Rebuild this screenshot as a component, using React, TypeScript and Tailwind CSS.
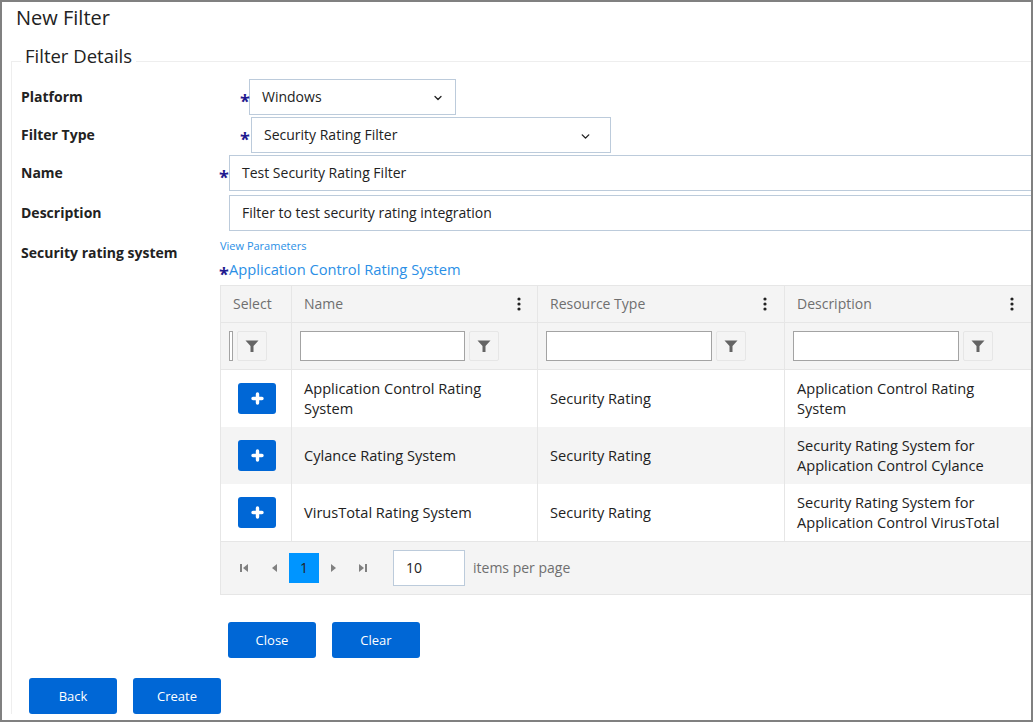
import { FiChevronDown } from "react-icons/fi";

const rows = [
  {
    name: "Application Control Rating System",
    type: "Security Rating",
    description: "Application Control Rating System",
  },
  {
    name: "Cylance Rating System",
    type: "Security Rating",
    description: "Security Rating System for Application Control Cylance",
  },
  {
    name: "VirusTotal Rating System",
    type: "Security Rating",
    description: "Security Rating System for Application Control VirusTotal",
  },
];

const Star = ({ className = "" }: { className?: string }) => (
  <span
    className={`w-[8px] shrink-0 flex justify-center text-[18px] font-bold leading-none text-[#1f1a8f] translate-y-[4px] ${className}`}
  >
    *
  </span>
);

const FilterButton = () => (
  <div className="w-[30px] h-[30px] shrink-0 flex justify-center items-center bg-[#f4f4f4] border border-[#e6e6e6] rounded-[2px]">
    <svg width="14" height="14" viewBox="0 0 14 14">
      <path d="M0.5 1.5h13L8.5 7v6l-3-0V7z" fill="#646464" />
    </svg>
  </div>
);

const Dots = () => (
  <svg width="4" height="14" viewBox="0 0 4 14">
    <circle cx="2" cy="2" r="1.6" fill="#222" />
    <circle cx="2" cy="7" r="1.6" fill="#222" />
    <circle cx="2" cy="12" r="1.6" fill="#222" />
  </svg>
);

const PlusIcon = () => (
  <svg width="13" height="13" viewBox="0 0 13 13">
    <path d="M6.5 2v9M2 6.5h9" stroke="#fff" strokeWidth="3.4" strokeLinecap="round" />
  </svg>
);

const HeaderCell = ({ title }: { title: string }) => (
  <th className="border-r border-b border-[#e6e6e6] pl-[12px] font-normal text-left">
    <div className="w-[217px] flex items-center justify-between text-[#6f6f6f]">
      <span className="pb-[2px]">{title}</span>
      <Dots />
    </div>
  </th>
);

const FilterCell = ({ inputClass }: { inputClass: string }) => (
  <td className="border-r border-b border-[#e6e6e6] pl-[8px]">
    <div className="flex items-center gap-[4px]">
      <input className={`${inputClass} h-[30px] bg-white border border-[#a3a3a3]`} />
      <FilterButton />
    </div>
  </td>
);

const Pager = ({ d }: { d: string }) => (
  <svg width="10" height="10" viewBox="0 0 10 10">
    <path d={d} fill="#808080" />
  </svg>
);

const Button = ({ label }: { label: string }) => (
  <button className="w-[88px] h-[36px] pt-[2px] bg-[#0067d6] text-white text-[13px] rounded-[3px]">
    {label}
  </button>
);

const Field = ({
  label,
  children,
  className = "",
}: {
  label: string;
  children: React.ReactNode;
  className?: string;
}) => (
  <div className={`flex items-center ${className}`}>
    <p className="w-[199px] shrink-0 pb-[2px] font-bold text-[14px] text-[#222]">{label}</p>
    {children}
  </div>
);

export default function App() {
  return (
    <div
      className="w-[1033px] h-[722px] border-2 border-[#808080] bg-white overflow-hidden text-[14px] text-[#222]"
      style={{ fontFamily: '"Open Sans", sans-serif' }}
    >
      <h1 className="h-[32px] pl-[14px] pt-[2px] text-[20px] leading-[28px] text-[#222]">
        New Filter
      </h1>
      <fieldset className="ml-[9px] mt-[10px] h-[670px] border-t border-l border-[#eeeeee] min-w-0">
        <legend className="ml-[9px] px-[4px] pb-[10px] text-[18.5px] leading-[24px]">
          Filter Details
        </legend>
        <div className="pl-[9px] mt-[1px]">
          <Field label="Platform" className="h-[36px]">
            <Star className="ml-[21px]" />
            <div className="w-[207px] h-[36px] border border-[#bccbdb] flex items-center justify-between pl-[12px] pr-[11px]">
              <span className="pb-[2px]">Windows</span>
              <FiChevronDown size={12} strokeWidth={2.6} className="mt-[2px]" />
            </div>
          </Field>
          <Field label="Filter Type" className="h-[36px] mt-[2px]">
            <Star className="ml-[21px] mr-[2px]" />
            <div className="w-[360px] h-[36px] border border-[#bccbdb] flex items-center justify-between pl-[12px] pr-[18px]">
              <span className="pb-[2px]">Security Rating Filter</span>
              <FiChevronDown size={13} strokeWidth={2.6} className="mt-[2px]" />
            </div>
          </Field>
          <Field label="Name" className="h-[36px] mt-[2px]">
            <Star className="mr-[1px]" />
            <div className="w-[830px] shrink-0 h-[36px] pb-[2px] border border-[#bccbdb] flex items-center pl-[12px]">
              Test Security Rating Filter
            </div>
          </Field>
          <Field label="Description" className="h-[36px] mt-[4px]">
            <div className="ml-[9px] w-[830px] shrink-0 h-[36px] pb-[2px] border border-[#bccbdb] flex items-center pl-[12px]">
              Filter to test security rating integration
            </div>
          </Field>
          <div className="flex mt-[7px]">
            <p className="w-[199px] shrink-0 font-bold text-[14px] pt-[4px]">
              Security rating system
            </p>
            <div className="w-[830px] shrink-0">
              <p className="text-[11px] leading-[16px] text-[#2b8fe6]">View Parameters</p>
              <div className="flex items-center h-[24px] mt-[4px] mb-[3px]">
                <Star className="mr-[1px]" />
                <span className="pb-[2px] text-[#2b8fe6] text-[14.7px] leading-[20px]">
                  Application Control Rating System
                </span>
              </div>
              <table className="w-[814px] table-fixed border-collapse border-t border-l border-[#e6e6e6]">
                <colgroup>
                  <col className="w-[71px]" />
                  <col className="w-[246px]" />
                  <col className="w-[247px]" />
                  <col className="w-[250px]" />
                </colgroup>
                <thead>
                  <tr className="h-[37px] bg-[#f4f4f4]">
                    <th className="border-r border-b border-[#e6e6e6] pb-[2px] font-normal text-left pl-[12px] text-[#6f6f6f]">
                      Select
                    </th>
                    <HeaderCell title="Name" />
                    <HeaderCell title="Resource Type" />
                    <HeaderCell title="Description" />
                  </tr>
                  <tr className="h-[47px] bg-[#f4f4f4]">
                    <td className="border-r border-b border-[#e6e6e6] pl-[8px]">
                      <div className="flex items-center gap-[4px]">
                        <input className="w-[4px] h-[30px] bg-white border border-[#a3a3a3]" />
                        <FilterButton />
                      </div>
                    </td>
                    <FilterCell inputClass="w-[165px]" />
                    <FilterCell inputClass="w-[166px]" />
                    <FilterCell inputClass="w-[166px]" />
                  </tr>
                </thead>
                <tbody className="text-[14.6px]">
                  {rows.map((row, i) => (
                    <tr
                      key={row.name}
                      className={`h-[57px] leading-[20px] ${i == 1 ? "bg-[#f4f4f4]" : "bg-white"}`}
                    >
                      <td className="border-r border-[#e6e6e6] pl-[17px]">
                        <button className="w-[38px] h-[31px] flex justify-center items-center bg-[#0067d6] rounded-[3px]">
                          <PlusIcon />
                        </button>
                      </td>
                      <td className="border-r border-[#e6e6e6] pl-[12px] pr-[30px]">{row.name}</td>
                      <td className="border-r border-[#e6e6e6] pl-[12px] pr-[30px]">{row.type}</td>
                      <td className="border-r border-[#e6e6e6] pl-[12px] pr-[20px]">{row.description}</td>
                    </tr>
                  ))}
                </tbody>
              </table>
              <div className="h-[54px] bg-[#f4f4f4] border border-[#e6e6e6] flex items-center pl-[18px]">
                <Pager d="M1 1h2v8H1zM9 1v8L4 5z" />
                <div className="ml-[20px]">
                  <Pager d="M8 1v8L3 5z" />
                </div>
                <div className="ml-[10px] w-[30px] h-[30px] bg-[#0095ff] flex justify-center items-center">
                  1
                </div>
                <div className="ml-[10px]">
                  <Pager d="M2 1v8l5-4z" />
                </div>
                <div className="ml-[19px]">
                  <Pager d="M1 1v8l5-4zM7 1h2v8H7z" />
                </div>
                <div className="ml-[25px] w-[72px] h-[36px] bg-white border border-[#bccbdb] flex items-center pl-[12px]">
                  10
                </div>
                <span className="ml-[8px] text-[#6f6f6f]">items per page</span>
              </div>
              <div className="flex gap-[16px] mt-[27px] ml-[8px]">
                <Button label="Close" />
                <Button label="Clear" />
              </div>
            </div>
          </div>
          <div className="flex gap-[16px] mt-[20px] ml-[8px]">
            <Button label="Back" />
            <Button label="Create" />
          </div>
        </div>
      </fieldset>
    </div>
  );
}
